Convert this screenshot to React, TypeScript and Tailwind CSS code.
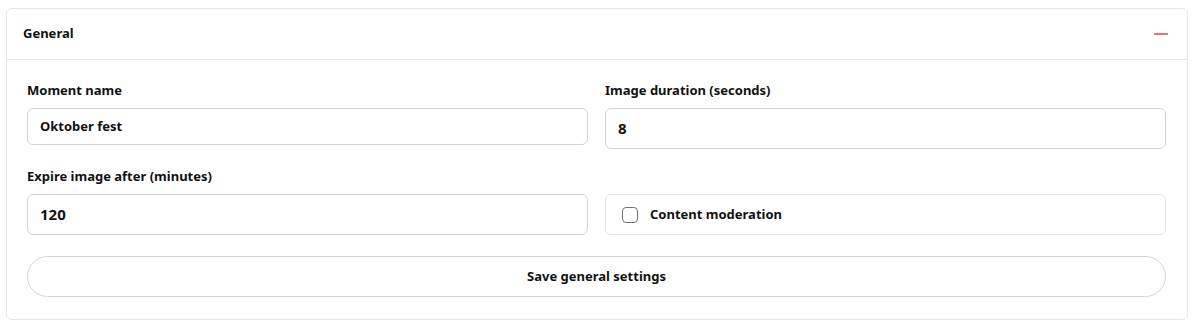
import React from "react";

export default function App() {
  const font = { fontFamily: '"Noto Sans", "Open Sans", sans-serif' };
  return (
    <div className="w-[1195px] h-[324px] bg-white pt-2 px-[6px]" style={font}>
      <div className="w-[1182px] border border-[#e4e4e7] rounded-[6px] bg-white text-[#111]">
        <div className="h-[51px] flex items-center justify-between pl-[16px] pr-[19px] border-b border-[#e4e4e7]">
          <span className="text-[13px] font-bold">General</span>
          <span className="block w-[14px] h-[2px] bg-[#e87474]" />
        </div>
        <div className="pl-5 pr-[21px] pt-[21px] pb-[22px]">
          <div className="grid grid-cols-2 gap-x-[17px] gap-y-[18px]">
            <div className="flex flex-col gap-[9px]">
              <label className="text-[13px] leading-[18px] font-bold">Moment name</label>
              <div className="h-[37px] border border-[#d4d4d8] rounded-[6px] flex items-center px-3 text-[13px] font-bold">
                Oktober fest
              </div>
            </div>
            <div className="flex flex-col gap-[9px]">
              <label className="text-[13px] leading-[18px] font-bold">Image duration (seconds)</label>
              <div className="h-[41px] border border-[#d4d4d8] rounded-[6px] flex items-center px-3 text-[15px] font-bold">
                8
              </div>
            </div>
            <div className="flex flex-col gap-[9px]">
              <label className="text-[13px] leading-[18px] font-bold">Expire image after (minutes)</label>
              <div className="h-[41px] border border-[#d4d4d8] rounded-[6px] flex items-center px-3 text-[15px] font-bold">
                120
              </div>
            </div>
            <div className="flex flex-col justify-end">
              <div className="h-[41px] border border-[#e4e4e7] rounded-[6px] flex items-center px-4 gap-3">
                <span className="block w-4 h-4 border-[1.5px] border-[#6b7280] rounded-[4px] bg-white" />
                <span className="text-[13px] font-bold">Content moderation</span>
              </div>
            </div>
          </div>
          <button className="mt-[21px] w-full h-[41px] border border-[#d4d4d8] rounded-full text-[13px] font-bold bg-white text-[#111]">
            Save general settings
          </button>
        </div>
      </div>
    </div>
  );
}
